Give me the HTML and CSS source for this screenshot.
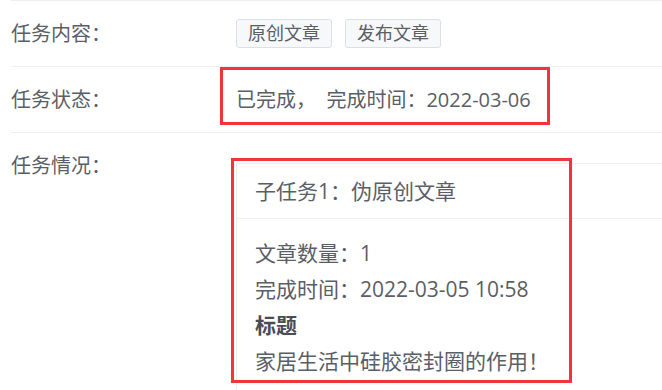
FILE: index.html
```html
<!DOCTYPE html>
<html lang="zh-CN">
<head>
    <meta charset="UTF-8">
    <meta name="viewport" content="width=device-width, initial-scale=1.0">
    <title>任务详情</title>
    <link rel="stylesheet" href="styles.css">
</head>
<body>
    <div class="page">
        <div class="row">
            <div class="label">任务内容：</div>
            <div class="value">
                <span class="tag">原创文章</span>
                <span class="tag">发布文章</span>
            </div>
        </div>
        <div class="row">
            <div class="label">任务状态：</div>
            <div class="value">已完成，&nbsp; 完成时间：2022-03-06</div>
        </div>
        <div class="row row-top">
            <div class="label">任务情况：</div>
            <div class="card">
                <div class="card-header">子任务1：伪原创文章</div>
                <div class="card-body">
                    <div class="line">文章数量：1</div>
                    <div class="line">完成时间：2022-03-05 10:58</div>
                    <div class="line strong">标题</div>
                    <div class="line">家居生活中硅胶密封圈的作用！</div>
                </div>
            </div>
        </div>

        <!-- annotation boxes -->
        <div class="mark mark-status"></div>
        <div class="mark mark-card"></div>
    </div>
</body>
</html>
```

FILE: styles.css
```css
html, body {
    margin: 0;
    background: #ffffff;
    overflow: hidden;
}

body {
    font-family: "Open Sans", "Noto Sans CJK SC", sans-serif;
    font-size: 20px;
    color: #5a5e66;
}

.page {
    position: relative;
    padding-left: 11px;
    height: 390px;
}

.row {
    display: flex;
    align-items: center;
    height: 65px;
    border-top: 1px solid #ebeef2;
}

.row-top {
    align-items: flex-start;
    height: auto;
}

.label {
    width: 225px;
    flex-shrink: 0;
    line-height: 26px;
}

.row-top .label {
    padding-top: 20px;
}

.value {
    display: flex;
    align-items: center;
    gap: 13px;
    line-height: 26px;
}

.tag {
    display: inline-block;
    padding: 0 11px;
    font-size: 18px;
    line-height: 27px;
    border: 1px solid #dcdfe6;
    border-radius: 3px;
    background: #f7f8fa;
}

.card {
    flex: 1;
    margin-top: 30px;
    font-size: 21px;
    border-top: 1px solid #ebeef2;
    border-left: 1px solid #ebeef2;
}

.card-header {
    padding: 14px 18px;
    line-height: 26px;
    border-bottom: 1px solid #ebeef2;
}

.card-body {
    padding: 16px 18px 20px;
}

.line {
    line-height: 36px;
}

.strong {
    font-weight: bold;
    color: #4a4d55;
}

.mark {
    position: absolute;
    border: 3px solid #f5333a;
}

.mark-status {
    left: 220px;
    top: 67px;
    width: 324px;
    height: 52px;
}

.mark-card {
    left: 231px;
    top: 158px;
    width: 335px;
    height: 219px;
}
```
